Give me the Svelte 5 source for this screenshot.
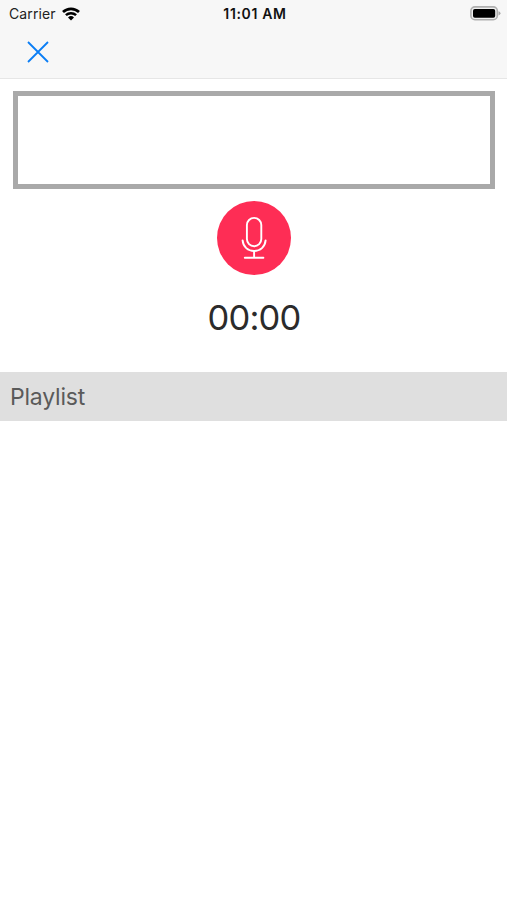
<script>
	let elapsed = 0;
	let recordings = [];

	function pad(n) {
		return String(n).padStart(2, '0');
	}

	$: time = pad(Math.floor(elapsed / 60)) + ':' + pad(elapsed % 60);
</script>

<div class="screen">
	<header>
		<div class="status-bar">
			<div class="carrier">
				<span>Carrier</span>
				<svg width="18" height="14" viewBox="0 0 18 14">
					<path d="M1 5.1a11.6 11.6 0 0 1 16 0" fill="none" stroke="#000" stroke-width="2.7" />
					<path d="M3.9 8.2a7.4 7.4 0 0 1 10.2 0" fill="none" stroke="#000" stroke-width="2.5" />
					<path d="M6 10.4a4.4 4.4 0 0 1 6 0L9 13.5z" fill="#000" />
				</svg>
			</div>
			<div class="clock">11:01 AM</div>
			<div class="battery">
				<svg width="31" height="15" viewBox="0 0 31 15">
					<rect x="0.9" y="0.9" width="26.4" height="12.8" rx="4" fill="#f0f0f0" stroke="#b0b0b0" stroke-width="1.6" />
					<rect x="3" y="2.9" width="22.2" height="8.8" rx="1.8" fill="#000" />
					<path d="M28.5 5.2q2 .7 2 2.1t-2 2.1z" fill="#ababab" />
				</svg>
			</div>
		</div>
		<nav>
			<button class="close" aria-label="Close">
				<svg width="22" height="22" viewBox="0 0 22 22">
					<path d="M1 1l20 20M21 1L1 21" fill="none" stroke="#0a7df5" stroke-width="1.8" />
				</svg>
			</button>
		</nav>
	</header>

	<div class="waveform"></div>

	<button class="record" aria-label="Record">
		<svg width="74" height="74" viewBox="0 0 74 74" fill="none" stroke="#fff" stroke-width="1.9" stroke-linecap="round">
			<rect x="29.9" y="16.9" width="14.4" height="28.4" rx="7.2" />
			<path d="M25.6 39.4c.5 6.4 5.4 10.6 11.5 10.6s11-4.2 11.5-10.6" />
			<path d="M37.1 50v6.8M27.8 56.8h18.6" />
		</svg>
	</button>

	<div class="time">{time}</div>

	<h2>Playlist</h2>
	<ul>
		{#each recordings as recording}
			<li>{recording}</li>
		{/each}
	</ul>
</div>

<style>
	:global(body) {
		background: #fff;
	}

	.screen {
		display: flex;
		flex-direction: column;
		min-height: 900px;
		font-family: Inter, "Liberation Sans", sans-serif;
		background: #fff;
	}

	header {
		height: 78px;
		background: #f7f7f7;
		border-bottom: 1px solid #e6e6e6;
	}

	.status-bar {
		display: grid;
		grid-template-columns: 1fr auto 1fr;
		align-items: center;
		height: 27px;
		padding: 0 6px 0 9px;
	}

	.carrier {
		display: flex;
		align-items: center;
		gap: 6px;
		font-size: 14px;
		letter-spacing: 0.1px;
		color: #222;
	}

	.clock {
		font-size: 14px;
		font-weight: 600;
		letter-spacing: 0.65px;
		color: #111;
	}

	.battery {
		display: flex;
		justify-content: flex-end;
	}

	nav {
		display: flex;
		align-items: center;
		height: 50px;
		padding-left: 27px;
	}

	button {
		display: block;
		padding: 0;
		border: none;
		background: none;
		cursor: pointer;
	}

	svg {
		display: block;
	}

	.waveform {
		box-sizing: border-box;
		height: 98px;
		margin: 12px 12px 0 13px;
		border: 5px solid #a9a9a9;
	}

	.record {
		align-self: center;
		margin-top: 12px;
		border-radius: 50%;
		background: #fe2d55;
	}

	.time {
		height: 46px;
		margin-top: 20px;
		padding-left: 1px;
		font-size: 34.5px;
		line-height: 46px;
		letter-spacing: -0.8px;
		text-align: center;
		color: #2b2b2b;
	}

	h2 {
		height: 49px;
		margin: 31px 0 0;
		padding-left: 10px;
		font-size: 23px;
		font-weight: 400;
		line-height: 51px;
		letter-spacing: -0.2px;
		color: #5a5a5a;
		background: #dfdfdf;
	}

	ul {
		margin: 0;
		padding: 0;
		list-style: none;
	}
</style>
